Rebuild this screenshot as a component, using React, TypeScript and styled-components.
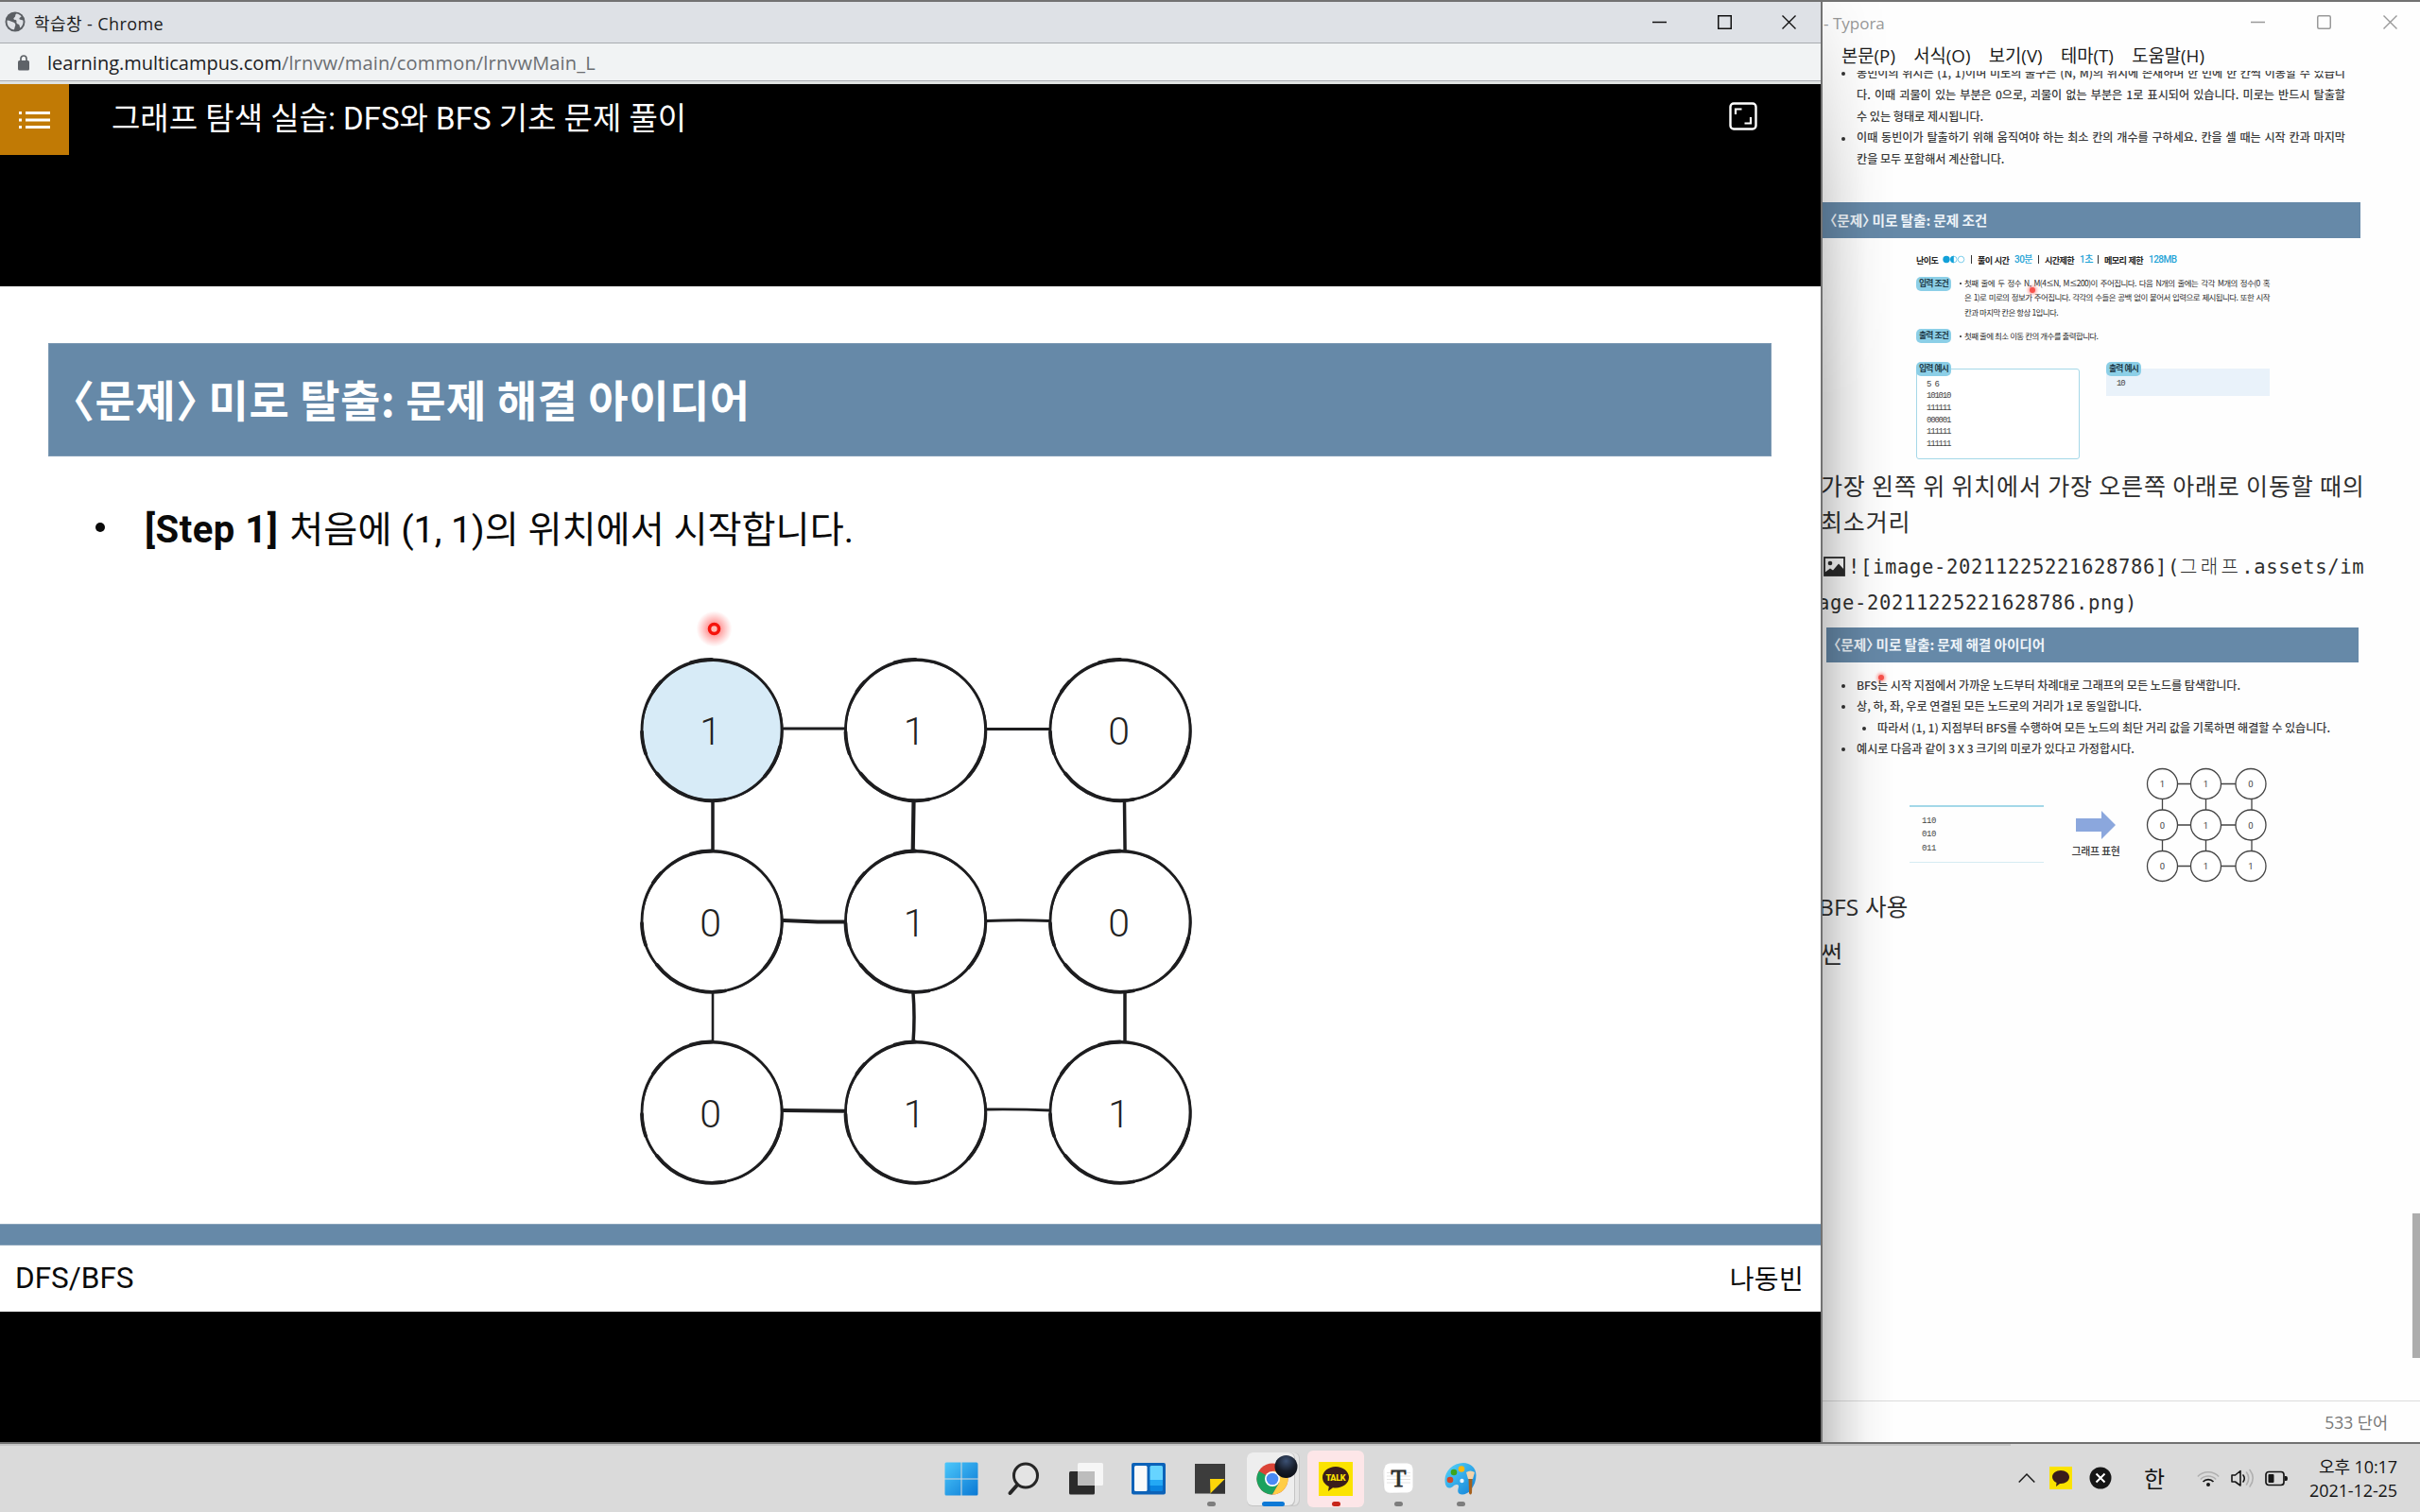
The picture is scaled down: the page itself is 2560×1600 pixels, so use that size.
import React from 'react';
import styled, { createGlobalStyle } from 'styled-components';

const KR = '"Noto Sans CJK KR", sans-serif';
const RKR = 'Roboto, "Noto Sans CJK KR", sans-serif';
const UI = '"Open Sans", "Noto Sans CJK KR", sans-serif';
const MONO = '"DejaVu Sans Mono", "Noto Sans CJK KR", monospace';
const STEEL = '#6689a8';
const BORDER = '#727272';

const Global = createGlobalStyle`
  *, *::before, *::after { box-sizing: border-box; }
  body { margin: 0; background: #d9d9d9; overflow: hidden; }
  svg { display: block; flex: none; overflow: visible; }
`;

const Desktop = styled.div`
  width: 2560px;
  height: 1600px;
  display: flex;
  flex-direction: column;
  overflow: hidden;
  font-family: ${KR};
  white-space: nowrap;
`;

const Windows = styled.div`
  height: 1528px;
  display: flex;
  border-top: 2px solid ${BORDER};
  border-bottom: 2px solid ${BORDER};
`;

/* ---------- Chrome window ---------- */

const ChromeWindow = styled.section`
  width: 1928px;
  flex: none;
  display: flex;
  flex-direction: column;
  border-right: 2px solid ${BORDER};
  background: #000;
`;

const TitleBar = styled.header`
  height: 44px;
  display: flex;
  align-items: center;
  padding: 0 26px 1px 5px;
  background: #dee1e6;
  border-bottom: 1px solid #a9acb0;
`;

const WindowTitle = styled.span`
  margin-left: 9px;
  padding-top: 4px;
  flex: 1;
  font: 400 18px/30px ${UI};
  letter-spacing: 0.4px;
  color: #1c1c1c;
`;

const Controls = styled.div<{ $gap: number; $color: string }>`
  display: flex;
  align-items: center;
  gap: ${(p) => p.$gap}px;
  color: ${(p) => p.$color};
`;

const AddressBar = styled.div`
  height: 43px;
  display: flex;
  align-items: center;
  padding: 1px 0 0 19px;
  background: #f1f3f4;
  border-bottom: 3px solid #dfe2e2;
  box-shadow: inset 0 -1px 0 #a9acb0;
`;

const Url = styled.span`
  margin-left: 19px;
  font: 400 20px/30px ${UI};
  color: #202124;
`;

const UrlPath = styled.span`
  color: #6b6e72;
  letter-spacing: 0.17px;
`;

const PlayerHeader = styled.div`
  height: 214px;
  display: flex;
  align-items: flex-start;
`;

const MenuButton = styled.button`
  width: 73px;
  height: 75px;
  padding: 0;
  border: 0;
  background: #c17a05;
  display: flex;
  align-items: center;
  justify-content: center;
`;

const LectureTitle = styled.h1`
  margin: 0 0 0 45px;
  flex: 1;
  font: 400 33px/74px ${RKR};
  color: #fff;
`;

const ExpandButton = styled.button`
  margin: 19px 67px 0 0;
  padding: 0;
  border: 0;
  background: none;
`;

const Slide = styled.main`
  height: 1085px;
  padding-top: 60px;
  display: flex;
  flex-direction: column;
  background: #fff;
  color: #0a0a0a;
`;

const SlideHeading = styled.h2`
  margin: 0 52px 0 51px;
  height: 120px;
  padding-left: 26px;
  background: ${STEEL};
  box-shadow: inset 0 0 0 1px #7d9ab4;
  font: 700 46px/117px ${KR};
  letter-spacing: 0.5px;
  color: #fff;
`;

const Angle = styled.span`
  font-feature-settings: 'halt';
`;

const StepLine = styled.div`
  height: 150px;
  display: flex;
  align-items: baseline;
  padding-left: 101px;
  font: 400 39.2px/156px ${RKR};
`;

const BigBullet = styled.i`
  width: 10px;
  height: 10px;
  margin: 0 42px 0 0;
  border-radius: 50%;
  background: #0a0a0a;
  transform: translateY(-11px);
`;

const StepLabel = styled.b`
  margin-right: 12px;
  font: 700 40px/156px ${RKR};
  letter-spacing: 0.5px;
`;

const SlideStripe = styled.div`
  height: 23px;
  background: ${STEEL};
  border-top: 1px solid #8aa4bb;
  border-bottom: 1px solid #8aa4bb;
`;

const SlideFooter = styled.footer`
  height: 70px;
  display: flex;
  justify-content: space-between;
  padding: 0 18px 0 16px;
  font: 400 31.5px/70px ${RKR};
`;

const Author = styled.span`
  font: 400 28px/68px ${KR};
  letter-spacing: 0.3px;
`;

/* ---------- Typora window ---------- */

const TyporaWindow = styled.section`
  position: relative;
  flex: 1;
  min-width: 0;
  display: flex;
  flex-direction: column;
  background: #fefefe;
  overflow: hidden;
`;

const WindowShade = styled.div`
  position: absolute;
  inset: 0 auto 0 0;
  width: 76px;
  background: linear-gradient(90deg, rgba(0, 0, 0, 0.22), rgba(0, 0, 0, 0.12) 26%, rgba(0, 0, 0, 0.03) 62%, transparent);
  mask-image: linear-gradient(180deg, rgba(0, 0, 0, 0.1), rgba(0, 0, 0, 0.7) 200px, #000 420px);
  pointer-events: none;
`;

const TyporaTitle = styled.header`
  height: 43px;
  display: flex;
  align-items: center;
  padding: 0 24px 1px 1px;
`;

const TyporaName = styled.span`
  flex: 1;
  padding-top: 3px;
  font: 400 17px/30px ${UI};
  color: #999;
`;

const MenuBar = styled.nav`
  height: 30px;
  display: flex;
  gap: 19.3px;
  padding-left: 20px;
  font: 400 18.8px/29px ${UI};
  color: #1b1b1b;
`;

const Doc = styled.article`
  flex: 1;
  min-height: 0;
  overflow: hidden;
  color: #2e2e2e;
`;

const Figure = styled.section<{ $top: number }>`
  margin-top: ${(p) => p.$top}px;
  color: #3a3a3a;
`;

const BulletLine = styled.div<{ $pitch: number; $indent?: number; $bullet?: boolean; $fill?: boolean }>`
  display: flex;
  height: ${(p) => p.$pitch}px;
  padding-left: ${(p) => 20 + (p.$indent ?? 0)}px;
  font: 500 12.1px/${(p) => p.$pitch}px ${KR};

  &::before {
    content: '';
    flex: none;
    width: 4px;
    height: 4px;
    margin: ${(p) => p.$pitch / 2 - 1}px 12px 0 0;
    border-radius: 50%;
    background: ${(p) => (p.$bullet === false ? 'transparent' : '#333')};
  }
  span {
    width: ${(p) => (p.$fill ? '517px' : 'auto')};
    white-space: ${(p) => (p.$fill ? 'normal' : 'nowrap')};
    text-align: justify;
    text-align-last: ${(p) => (p.$fill ? 'justify' : 'left')};
  }
`;

const FigureHeading = styled.h3<{ $left?: number; $width: number; $h: number; $gap?: number }>`
  margin: 0 0 ${(p) => p.$gap ?? 0}px ${(p) => p.$left ?? 0}px;
  width: ${(p) => p.$width}px;
  height: ${(p) => p.$h}px;
  padding-left: 8px;
  background: ${STEEL};
  font: 700 14.7px/${(p) => p.$h - 1}px ${KR};
  letter-spacing: -0.1px;
  color: #eef4f9;
`;

const MetaRow = styled.div`
  display: grid;
  grid-template-columns: 28px 30px 7px 39px 25px 7px 37px 19px 7px 47px 30px;
  align-items: center;
  height: 14px;
  margin: 15px 0 11px 99px;
  font: 700 9.1px/14px ${KR};
  letter-spacing: -0.65px;
  word-spacing: 1px;
  color: #222;
`;

const MetaValue = styled.span`
  font-family: ${RKR};
  font-weight: 500;
  font-size: 10px;
  line-height: 16px;
  letter-spacing: -0.5px;
  color: #1ea3d6;
`;

const MetaRule = styled.i`
  width: 1px;
  height: 9px;
  background: #333;
`;

const Condition = styled.div<{ $bottom: number }>`
  display: flex;
  margin: 0 0 ${(p) => p.$bottom}px 99px;
`;

const Pill = styled.span<{ $drop?: number }>`
  flex: none;
  width: 37px;
  height: 15px;
  margin-top: ${(p) => p.$drop ?? 0}px;
  border-radius: 5px;
  background: #8ccfe7;
  text-align: center;
  font: 700 8.8px/14px ${KR};
  letter-spacing: -0.85px;
  word-spacing: 1px;
  color: #1f3a48;
`;

const ConditionText = styled.div`
  width: 329px;
  margin-left: 8px;
  padding-left: 6px;
  font: 400 8.5px/15.7px ${KR};
  letter-spacing: -0.6px;
  word-spacing: 0.3px;
  color: #2a2a2a;
`;

const ConditionLine = styled.div<{ $fill?: boolean; $bullet?: boolean }>`
  height: 15.7px;
  white-space: ${(p) => (p.$fill ? 'normal' : 'nowrap')};
  text-align-last: ${(p) => (p.$fill ? 'justify' : 'left')};

  &::before {
    content: ${(p) => (p.$bullet ? "''" : 'none')};
    float: left;
    width: 2px;
    height: 2px;
    margin: 7px 0 0 -5px;
    border-radius: 50%;
    background: #222;
  }
`;

const Examples = styled.div`
  display: flex;
  align-items: flex-start;
  gap: 28px;
  margin: 19px 0 0 99px;
`;

const Example = styled.div<{ $open?: boolean }>`
  width: 173px;
  height: ${(p) => (p.$open ? 103 : 36)}px;
  display: flex;
  flex-direction: column;
  background: linear-gradient(${(p) => (p.$open ? '#fff, #fff' : '#e9f2fa, #e9f2fa')}) no-repeat 0 7px;
`;

const ExampleBody = styled.pre<{ $open?: boolean }>`
  margin: -8px 0 0;
  padding: ${(p) => (p.$open ? '10px 0 0 10px' : '10px 0 0 11px')};
  flex: 1;
  border: ${(p) => (p.$open ? '1.5px solid #a5d8e8' : '0')};
  border-radius: 3px;
  font: 400 9px/12.7px "Liberation Mono", monospace;
  letter-spacing: -1.2px;
  color: #444;
`;

const ExamplePill = styled(Pill)`
  position: relative;
  z-index: 1;
`;

const Paragraph = styled.p<{ $top: number; $left?: number; $ls?: number; $latin?: boolean }>`
  margin: ${(p) => p.$top}px 0 0 ${(p) => p.$left ?? 0}px;
  font: 400 ${(p) => (p.$latin ? 24.5 : 25)}px/38px ${(p) => (p.$latin ? UI : KR)};
  letter-spacing: ${(p) => p.$ls ?? 0}px;
`;

const CodeLine = styled.div<{ $left: number; $top?: number }>`
  display: flex;
  align-items: center;
  gap: 3px;
  height: 38.5px;
  margin: ${(p) => p.$top ?? 0}px 0 0 ${(p) => p.$left}px;
  font: 400 20.5px/38.5px ${MONO};
  letter-spacing: 0.66px;
`;

const CodeHangul = styled.span`
  font: 300 20px/38.5px ${KR};
  letter-spacing: 3.3px;
`;

const Picture = styled.div`
  height: 137px;
  display: flex;
  align-items: flex-start;
`;

const SampleBlock = styled.pre`
  width: 142px;
  height: 61px;
  margin: 48px 0 0 92px;
  padding: 8px 0 0 13px;
  border-top: 2px solid #a3d8e8;
  border-bottom: 1px solid #d6ecf3;
  font: 400 9px/14.8px "Liberation Mono", monospace;
  letter-spacing: -0.4px;
  color: #444;
`;

const ArrowBlock = styled.div`
  width: 64px;
  margin: 54px 21px 0 23px;
  display: flex;
  flex-direction: column;
  align-items: center;
  gap: 3px;
  font: 500 11px/18px ${KR};
  letter-spacing: -0.35px;
`;

const GraphFrame = styled.div`
  padding-top: 8px;
`;

const StatusBar = styled.footer`
  height: 44px;
  flex: none;
  border-top: 1px solid #dcdcdc;
  padding-right: 34px;
  text-align: right;
  font: 400 17.5px/45px ${UI};
  color: #777;
`;

const ScrollThumb = styled.div`
  position: absolute;
  right: 0;
  top: 1282px;
  width: 8px;
  height: 153px;
  background: #adadad;
`;

/* ---------- Taskbar ---------- */

const Taskbar = styled.footer`
  flex: 1;
  display: flex;
  align-items: center;
  padding: 0 24px 0 984px;
  background: linear-gradient(#c6c6c6, #c6c6c6) no-repeat 0 0 / 2127px 2px, #dadada;
`;

const Slot = styled.div`
  position: relative;
  width: 66px;
  height: 72px;
  padding-top: 19px;
  display: flex;
  flex-direction: column;
  align-items: center;

  > svg { position: relative; }
`;

const Tile = styled.div<{ $x: number; $y: number; $w: number; $h: number; $bg: string }>`
  position: absolute;
  left: ${(p) => p.$x}px;
  top: ${(p) => p.$y}px;
  width: ${(p) => p.$w}px;
  height: ${(p) => p.$h}px;
  border-radius: 6px;
  background: ${(p) => p.$bg};
`;

const Indicator = styled.i<{ $w?: number; $color?: string }>`
  position: relative;
  width: ${(p) => p.$w ?? 9}px;
  height: 5px;
  margin-top: 6px;
  border-radius: 2.5px;
  background: ${(p) => p.$color ?? '#7d7d7d'};
`;

const Tray = styled.div`
  margin-left: auto;
  display: flex;
  align-items: center;
  color: #141414;
`;

const TrayItem = styled.span<{ $gap: number }>`
  display: flex;
  margin-right: ${(p) => p.$gap}px;
`;

const Ime = styled.span`
  width: 22px;
  margin-right: 34px;
  font: 400 24px/34px ${KR};
`;

const Clock = styled.div`
  width: 116px;
  padding-top: 1px;
  text-align: right;
  font: 400 18px/25px ${UI};
  letter-spacing: -0.1px;
`;

/* ---------- Drawings ---------- */

const MinimizeIcon = () => (
  <svg width="15" height="15"><path d="M0 7.5H15" stroke="currentColor" strokeWidth="1.5" /></svg>
);
const MaximizeIcon = ({ r = 0 }: { r?: number }) => (
  <svg width="15" height="15"><rect x=".75" y=".75" width="13.5" height="13.5" rx={r} fill="none" stroke="currentColor" strokeWidth="1.5" /></svg>
);
const CloseIcon = () => (
  <svg width="15" height="15"><path d="M.5.5l14 14M14.5.5l-14 14" stroke="currentColor" strokeWidth="1.4" /></svg>
);

const GlobeIcon = () => (
  <svg width="22" height="22" viewBox="0 0 22 22">
    <circle cx="11" cy="11" r="10.500" fill="#5b5f64" />
    <path d="M2.500 9.500c3 .3 5 1.500 6.500 2 1.800.6 2.300 1.500 2.300 3 0 1.200-.8 1.700-.8 3 0 .8-.3 1.500-1 2C5.500 18.500 2.500 15.500 2.500 11zM12.500 2.500c2 .3 3.800 1.300 5 2.800-.3 1.200-1.500 1-2 2-.5 1.200.8 1.700 2 1.700.8 0 1.500.3 2 .8.4 3.500-1 6-3 7.700-.8-.5-.5-2-1.200-3.200-.7-1-2.300-.6-2.800-2-.4-1.300.4-2-.3-2.800-.8-.8-2.200-.2-2.700-1.200-.6-1.300 1-1.800 1.500-2.800.5-1.200 0-2.500 1.500-3z" fill="#dee1e6" />
  </svg>
);

const LockIcon = () => (
  <svg width="12" height="17" viewBox="0 0 12 17">
    <rect y="6" width="12" height="10.500" rx="1.500" fill="#5f6368" />
    <path d="M3 7V4a3 3 0 0 1 6 0v3" fill="none" stroke="#5f6368" strokeWidth="1.700" />
  </svg>
);

const ListIcon = () => (
  <svg width="33" height="20" viewBox="0 0 33 20" fill="#fff">
    <path d="M0 1h3v3H0zM0 8.500h3v3H0zM0 16h3v3H0zM7 1h26v3H7zM7 8.500h26v3H7zM7 16h26v3H7z" />
  </svg>
);

const ExpandIcon = () => (
  <svg width="30" height="30" fill="none" stroke="#fff">
    <rect x="1.500" y="1.500" width="27" height="27" rx="3.500" strokeWidth="2.400" />
    <path d="M7 13V7.500H13.500M23 16V22.500H16.500" strokeWidth="2.200" />
  </svg>
);

const BrokenImageIcon = () => (
  <svg width="23" height="21" viewBox="0 0 23 21">
    <rect x="1" y="1" width="21" height="19" fill="none" stroke="#2b2b2b" strokeWidth="1.800" />
    <circle cx="7" cy="7" r="2.300" fill="#2b2b2b" />
    <path d="M1 20v-3l6-4.500 3 2 6-7 6 6.500v6z" fill="#2b2b2b" />
  </svg>
);

const GRID = [[1, 1, 0], [0, 1, 0], [0, 1, 1]];

function MazeGraph() {
  const xs = [753, 968.5, 1185];
  const ys = [139.5, 342, 544];
  const ink = '#1d1d1f';
  return (
    <svg width="1926" height="662" viewBox="0 0 1926 662">
      <defs>
        <radialGradient id="laser">
          <stop offset="0.3" stopColor="#ff2a2a" stopOpacity=".5" />
          <stop offset="1" stopColor="#ff4a4a" stopOpacity="0" />
        </radialGradient>
      </defs>
      <g stroke={ink} fill="none" strokeLinecap="round">
        <path strokeWidth="3" d="M829 138h65M1044 138.500h67M1044 341.500q34-1.500 67 0M1044 541q34-.5 67 1" />
        <path strokeWidth="4" d="M829 341l36 1.500h29M829 542l65 .8" />
        <path strokeWidth="3.500" d="M754 216v52M1189.500 216l.6 52M966 418q2 25 0 52M1190 418v52" />
        <path strokeWidth="4.200" d="M966.500 216l-.8 52" />
        <path strokeWidth="2.600" d="M754 418v52" />
      </g>
      {GRID.map((row, r) =>
        row.map((v, c) => (
          <g key={`${r}${c}`} transform={`translate(${xs[c]} ${ys[r]})`} fill="none" stroke={ink}>
            <ellipse rx="74" ry="74.500" fill={r + c === 0 ? '#d7ebf7' : '#fff'} strokeWidth="2.800" />
            <ellipse rx="74.300" ry="74" cx=".4" cy=".8" transform="rotate(-8)" strokeWidth="1.800" />
            <path d="M-58 46A74 74.500 0 0 0 14 73.500M-74 2A74 74.500 0 0 0 -70 25M72 18A74 74.500 0 0 1 56 49M-62-41A74 74.500 0 0 1 -54-51M-22-71.500A74 74.500 0 0 1 0-74.600" strokeWidth="3.800" strokeLinecap="round" />
            <text x="-1.500" y="15.500" textAnchor="middle" fontFamily="Roboto, sans-serif" fontSize="41" fontWeight="300" fill="#222" stroke="none">{v}</text>
          </g>
        )),
      )}
      <circle cx="755.500" cy="32.500" r="19" fill="url(#laser)" />
      <circle cx="755.500" cy="32.500" r="5" fill="#ffb9b3" stroke="#f5130b" strokeWidth="3.600" />
    </svg>
  );
}

function SmallGraph() {
  const xs = [17.5, 63.5, 111];
  const ys = [17.5, 61, 104.5];
  return (
    <svg width="130" height="124" viewBox="0 0 130 124">
      <path d="M17.500 17.500H111M17.500 61H111M17.500 104.500H111M17.500 17.500V104.500M63.500 17.500V104.500M112 17.500V104.500" stroke="#444" strokeWidth="1.300" />
      {GRID.map((row, r) =>
        row.map((v, c) => (
          <g key={`${r}${c}`} transform={`translate(${xs[c]} ${ys[r]})`}>
            <circle r="16" fill="#fff" stroke="#444" strokeWidth="1.300" />
            <text y="3.500" textAnchor="middle" fontFamily="Roboto, sans-serif" fontSize="9.500" fill="#444">{v}</text>
          </g>
        )),
      )}
    </svg>
  );
}

const LaserDot = styled.i<{ $x: number; $y: number }>`
  position: absolute;
  left: ${(p) => p.$x}px;
  top: ${(p) => p.$y}px;
  width: 6px;
  height: 6px;
  border-radius: 50%;
  background: #f8524c;
  box-shadow: 0 0 3px 2px rgba(255, 90, 84, 0.45);
`;

const StartIcon = () => (
  <svg width="36" height="36" viewBox="0 0 36 36">
    <defs><linearGradient id="win" x1="0" y1="0" x2="1" y2="1" gradientUnits="objectBoundingBox"><stop stopColor="#4cc8fb" /><stop offset="1" stopColor="#0a78d4" /></linearGradient></defs>
    <path d="M2 .5h15.500V17.500H.5V2Q.5.5 2 .5zM18.500.5H34Q35.500.5 35.500 2V17.500H18.500zM.5 18.500H17.500V35.500H2Q.5 35.500.5 34zM18.500 18.500H35.500V34q0 1.500-1.500 1.500H18.500z" fill="url(#win)" />
  </svg>
);

const SearchIcon = () => (
  <svg width="36" height="36" viewBox="0 0 36 36" fill="none" stroke="#262626">
    <circle cx="20" cy="14.500" r="12.500" strokeWidth="3" fill="#e4e4e4" />
    <path d="M11 24.500L3.500 33" strokeWidth="4" strokeLinecap="round" />
  </svg>
);

const TaskViewIcon = () => (
  <svg width="36" height="36" viewBox="0 0 36 36">
    <rect y="10" width="27" height="24.500" rx="1.500" fill="#2b2b2b" />
    <rect x="9" y="1" width="27" height="24" rx="1.500" fill="#f6f6f6" />
    <path d="M9 10H27V25H10.500Q9 25 9 23.500z" fill="#bdbdbd" />
  </svg>
);

const WidgetsIcon = () => (
  <svg width="36" height="36" viewBox="0 0 36 36">
    <rect y="1" width="36" height="33.500" rx="2" fill="#0c62b8" />
    <rect x="3" y="4" width="13.500" height="27" rx="1.500" fill="#fafafa" />
    <rect x="19.500" y="4" width="13.500" height="27" rx="1.500" fill="#0a84e0" />
    <path d="M21 4h10.500Q33 4 33 5.500V19H19.500V5.500Q19.500 4 21 4z" fill="#66d4ff" />
    <path d="M19.500 19H33v6H19.500z" fill="#23a8f5" />
  </svg>
);

const StickyIcon = () => (
  <svg width="36" height="36" viewBox="0 0 36 36">
    <path d="M1 2H33V33.500H1z" fill="#3c3c3c" />
    <path d="M17 18H33L17.500 33.500z" fill="#fdd509" />
    <path d="M33 18V33.500H17.500z" fill="#333" />
  </svg>
);

const ChromeIcon = () => (
  <svg width="36" height="36" viewBox="0 0 36 36">
    <circle cx="17" cy="18" r="16.500" fill="#db4437" />
    <path d="M17 18L2.700 9.750A16.500 16.500 0 0 0 17 34.500L24.200 22z" fill="#1ba25f" />
    <path d="M17 34.500A16.500 16.500 0 0 0 31.300 9.750H17L24.200 22z" fill="#ffcd46" />
    <circle cx="17" cy="18" r="8" fill="#fff" />
    <circle cx="17" cy="18" r="6.300" fill="#4a8af4" />
    <defs><radialGradient id="avatar" cx=".5" cy=".25" r=".75"><stop stopColor="#3c5174" /><stop offset=".6" stopColor="#161c28" /><stop offset="1" stopColor="#0b0e15" /></radialGradient></defs>
    <circle cx="31.500" cy="5" r="12" fill="url(#avatar)" />
  </svg>
);

const TalkIcon = () => (
  <svg width="36" height="36" viewBox="0 0 36 36">
    <rect width="36" height="36" fill="#fbe300" />
    <path d="M18 5c7.700 0 14 5 14 11.300S25.700 27.500 18 27.500q-1.500 0-3-.2L10 31l.8-5C6.500 24 4 20.500 4 16.300 4 10 10.300 5 18 5z" fill="#3a1d1b" />
    <text x="18" y="20" textAnchor="middle" fontFamily="Roboto, sans-serif" fontWeight="900" fontSize="9" fill="#fbe300" textLength="21">TALK</text>
  </svg>
);

const TyporaIcon = () => (
  <svg width="36" height="36" viewBox="0 0 36 36">
    <rect x="2" y="4" width="28" height="29" rx="6" fill="#e9e9e9" stroke="#cfcfcf" strokeWidth=".6" transform="rotate(-5 16 18)" />
    <rect x="3.500" y="1.500" width="30" height="31" rx="6" fill="#fff" />
    <path d="M6 11.500h25M6 15h25M6 18.500h25M6 22h25" stroke="#e3e3e3" />
    <text x="18.500" y="25.500" textAnchor="middle" fontFamily="'Liberation Serif', serif" fontSize="26" fill="#2d2d2d" stroke="#2d2d2d" strokeWidth=".9">T</text>
  </svg>
);

const PaintIcon = () => (
  <svg width="36" height="36" viewBox="0 0 36 36">
    <defs><linearGradient id="paint" x1="0" y1="0" x2="1" y2="1"><stop stopColor="#56d5fa" /><stop offset="1" stopColor="#1180d8" /></linearGradient></defs>
    <path d="M21 1C10 1 1.500 9.500 1.500 19c0 4 1 8.500 4.500 8.500 4 0 5-4 8.500-3.500 4 1-1.500 6 2 9.500 3 2.500 9 .5 12-3.500 4-5 6-10 6-16C34.500 6 28 1 21 1z" fill="url(#paint)" />
    <circle cx="7" cy="19" r="3.300" fill="#d1482a" />
    <circle cx="11" cy="11" r="3.300" fill="#3ca51c" />
    <circle cx="19" cy="7.500" r="3.300" fill="#fbb80f" />
    <circle cx="19.500" cy="20" r="2.200" fill="#e6f3fb" />
    <path d="M26.500 17h4l-.5 16q-1.500 3-3 0z" fill="#a5601c" />
    <path d="M24 11q4.500-3 9 0l-2 7h-5z" fill="#f2d3ab" />
  </svg>
);

const ChevronUpIcon = () => (
  <svg width="18" height="10"><path d="M.7 9.500L9 1l8.300 8.500" fill="none" stroke="#1a1a1a" strokeWidth="1.500" /></svg>
);
const KakaoTrayIcon = () => (
  <svg width="24" height="24" viewBox="0 0 24 24">
    <rect width="24" height="24" fill="#fbe300" />
    <path d="M12 4c5 0 9 3 9 7s-4 7-9 7h-1l-4 3 .5-4C5 16 3 13.500 3 11c0-4 4-7 9-7z" fill="#3a1d1b" />
  </svg>
);
const BlockedIcon = () => (
  <svg width="24" height="24" viewBox="0 0 24 24">
    <circle cx="12" cy="12" r="11.500" fill="#161616" />
    <path d="M7.500 7.500l9 9M16.500 7.500l-9 9" stroke="#fff" strokeWidth="2" />
  </svg>
);
const WifiIcon = () => (
  <svg width="24" height="24" viewBox="0 0 24 24" fill="none" strokeWidth="1.500">
    <path d="M.8 10.500a15.500 15.500 0 0 1 22.400 0M3.800 13.500a11.500 11.500 0 0 1 16.400 0" stroke="#b0b0b0" />
    <path d="M6.500 16a7.500 7.500 0 0 1 11 0" stroke="#161616" strokeWidth="1.700" />
    <circle cx="12" cy="19" r="2" fill="#161616" />
  </svg>
);
const SpeakerIcon = () => (
  <svg width="24" height="24" viewBox="0 0 24 24" fill="none" strokeWidth="1.600" strokeLinecap="round">
    <path d="M1 9h3.500L10 4.500v15.500L4.500 16H1z" stroke="#161616" strokeLinejoin="round" />
    <path d="M13 9q2.500 3.500 0 7" stroke="#161616" />
    <path d="M16.500 6q4.500 6 0 13M20 3.500q6.500 8.500 0 17.500" stroke="#b0b0b0" />
  </svg>
);
const BatteryIcon = () => (
  <svg width="24" height="24" viewBox="0 0 24 24">
    <rect x="1" y="5.500" width="19" height="14" rx="3" fill="none" stroke="#161616" strokeWidth="1.700" />
    <rect x="3.500" y="8" width="6" height="9" rx="1" fill="#161616" />
    <path d="M21 10h1.500q1.500 0 1.500 2.500T22.500 15H21z" fill="#161616" />
  </svg>
);

/* ---------- Page ---------- */

const SAMPLE_INPUT = '5 6\n101010\n111111\n000001\n111111\n111111';

function LectureWindow() {
  return (
    <ChromeWindow>
      <TitleBar>
        <GlobeIcon />
        <WindowTitle>학습창 - Chrome</WindowTitle>
        <Controls $gap={53.5} $color="#111"><MinimizeIcon /><MaximizeIcon /><CloseIcon /></Controls>
      </TitleBar>
      <AddressBar>
        <LockIcon />
        <Url>learning.multicampus.com<UrlPath>/lrnvw/main/common/lrnvwMain_L</UrlPath></Url>
      </AddressBar>
      <PlayerHeader>
        <MenuButton><ListIcon /></MenuButton>
        <LectureTitle>그래프 탐색 실습: DFS와 BFS 기초 문제 풀이</LectureTitle>
        <ExpandButton><ExpandIcon /></ExpandButton>
      </PlayerHeader>
      <Slide>
        <SlideHeading><Angle>〈</Angle>문제<Angle>〉</Angle> 미로 탈출: 문제 해결 아이디어</SlideHeading>
        <StepLine>
          <BigBullet />
          <StepLabel>[Step 1]</StepLabel>
          <span>처음에 (1, 1)의 위치에서 시작합니다.</span>
        </StepLine>
        <MazeGraph />
        <SlideStripe />
        <SlideFooter><span>DFS/BFS</span><Author>나동빈</Author></SlideFooter>
      </Slide>
    </ChromeWindow>
  );
}

function NotesWindow() {
  return (
    <TyporaWindow>
      <TyporaTitle>
        <TyporaName>- Typora</TyporaName>
        <Controls $gap={55} $color="#999"><MinimizeIcon /><MaximizeIcon r={1.5} /><CloseIcon /></Controls>
      </TyporaTitle>
      <MenuBar>
        {['본문(P)', '서식(O)', '보기(V)', '테마(T)', '도움말(H)'].map((m) => <span key={m}>{m}</span>)}
      </MenuBar>
      <Doc>
        <Figure $top={-9}>
          <BulletLine $pitch={22.75} $fill><span>동빈이의 위치는 (1, 1)이며 미로의 출구는 (N, M)의 위치에 존재하며 한 번에 한 칸씩 이동할 수 있습니</span></BulletLine>
          <BulletLine $pitch={22.75} $fill $bullet={false}><span>다. 이때 괴물이 있는 부분은 0으로, 괴물이 없는 부분은 1로 표시되어 있습니다. 미로는 반드시 탈출할</span></BulletLine>
          <BulletLine $pitch={22.75} $bullet={false}><span>수 있는 형태로 제시됩니다.</span></BulletLine>
          <BulletLine $pitch={22.75} $fill><span>이때 동빈이가 탈출하기 위해 움직여야 하는 최소 칸의 개수를 구하세요. 칸을 셀 때는 시작 칸과 마지막</span></BulletLine>
          <BulletLine $pitch={22.75} $bullet={false}><span>칸을 모두 포함해서 계산합니다.</span></BulletLine>
        </Figure>
        <Figure $top={34}>
          <FigureHeading $width={569} $h={38}><Angle>〈</Angle>문제<Angle>〉</Angle> 미로 탈출: 문제 조건</FigureHeading>
          <MetaRow>
            <span>난이도</span>
            <svg width="24" height="9" viewBox="0 0 24 9">
              <circle cx="4" cy="4.500" r="3.700" fill="#12a0d8" />
              <circle cx="11.800" cy="4.500" r="3.300" fill="#fff" stroke="#5cc0e6" strokeWidth=".8" />
              <path d="M11.800.8a3.700 3.700 0 0 0 0 7.400z" fill="#12a0d8" />
              <circle cx="19.500" cy="4.500" r="3.300" fill="#fff" stroke="#5cc0e6" strokeWidth=".8" />
            </svg>
            <MetaRule />
            <span>풀이 시간</span><MetaValue>30분</MetaValue><MetaRule />
            <span>시간제한</span><MetaValue>1초</MetaValue><MetaRule />
            <span>메모리 제한</span><MetaValue>128MB</MetaValue>
          </MetaRow>
          <Condition $bottom={9}>
            <Pill $drop={1}>입력 조건</Pill>
            <ConditionText>
              <ConditionLine $fill $bullet>첫째 줄에 두 정수 N, M(4≤N, M≤200)이 주어집니다. 다음 N개의 줄에는 각각 M개의 정수(0 혹</ConditionLine>
              <ConditionLine $fill>은 1)로 미로의 정보가 주어집니다. 각각의 수들은 공백 없이 붙어서 입력으로 제시됩니다. 또한 시작</ConditionLine>
              <ConditionLine>칸과 마지막 칸은 항상 1입니다.</ConditionLine>
            </ConditionText>
          </Condition>
          <Condition $bottom={0}>
            <Pill>출력 조건</Pill>
            <ConditionText>
              <ConditionLine $bullet>첫째 줄에 최소 이동 칸의 개수를 출력합니다.</ConditionLine>
            </ConditionText>
          </Condition>
          <Examples>
            <Example $open><ExamplePill>입력 예시</ExamplePill><ExampleBody $open>{SAMPLE_INPUT}</ExampleBody></Example>
            <Example><ExamplePill>출력 예시</ExamplePill><ExampleBody>10</ExampleBody></Example>
          </Examples>
        </Figure>
        <Paragraph $top={8} $left={-2} $ls={0.83}>가장 왼쪽 위 위치에서 가장 오른쪽 아래로 이동할 때의<br />최소거리</Paragraph>
        <CodeLine $left={1} $top={11}>
          <BrokenImageIcon />
          <span>![image-20211225221628786](<CodeHangul>그래프</CodeHangul>.assets/im</span>
        </CodeLine>
        <CodeLine $left={-5}>age-20211225221628786.png)</CodeLine>
        <Figure $top={6}>
          <FigureHeading $left={4} $width={563} $h={37} $gap={13}><Angle>〈</Angle>문제<Angle>〉</Angle> 미로 탈출: 문제 해결 아이디어</FigureHeading>
          <BulletLine $pitch={22.5}><span>BFS는 시작 지점에서 가까운 노드부터 차례대로 그래프의 모든 노드를 탐색합니다.</span></BulletLine>
          <BulletLine $pitch={22.5}><span>상, 하, 좌, 우로 연결된 모든 노드로의 거리가 1로 동일합니다.</span></BulletLine>
          <BulletLine $pitch={22.5} $indent={22}><span>따라서 (1, 1) 지점부터 BFS를 수행하여 모든 노드의 최단 거리 값을 기록하면 해결할 수 있습니다.</span></BulletLine>
          <BulletLine $pitch={22.5}><span>예시로 다음과 같이 3 X 3 크기의 미로가 있다고 가정합시다.</span></BulletLine>
          <Picture>
            <SampleBlock>{'110\n010\n011'}</SampleBlock>
            <ArrowBlock>
              <svg width="42" height="30" viewBox="0 0 42 30"><path d="M0 8H27V0L42 15 27 30V22H0z" fill="#8ba7dd" /></svg>
              <span>그래프 표현</span>
            </ArrowBlock>
            <GraphFrame><SmallGraph /></GraphFrame>
          </Picture>
        </Figure>
        <Paragraph $top={0} $left={-4} $ls={0.2} $latin>BFS 사용</Paragraph>
        <Paragraph $top={10} $left={-2}>썬</Paragraph>
      </Doc>
      <StatusBar>533 단어</StatusBar>
      <LaserDot $x={219} $y={302} />
      <LaserDot $x={59} $y={712} />
      <ScrollThumb />
      <WindowShade />
    </TyporaWindow>
  );
}

function TaskbarPanel() {
  return (
    <Taskbar>
      <Slot><StartIcon /></Slot>
      <Slot><SearchIcon /></Slot>
      <Slot><TaskViewIcon /></Slot>
      <Slot><WidgetsIcon /></Slot>
      <Slot><StickyIcon /><Indicator /></Slot>
      <Slot>
        <Tile $x={15} $y={9} $w={46} $h={57} $bg="#c9c9c9" />
        <Tile $x={15} $y={9} $w={45} $h={56} $bg="#e4e4e4" />
        <Tile $x={5} $y={9} $w={51} $h={57} $bg="#c4c4c4" />
        <Tile $x={5} $y={9} $w={50} $h={56} $bg="#eeeeee" />
        <ChromeIcon /><Indicator $w={24} $color="#0d79d6" />
      </Slot>
      <Slot><Tile $x={3} $y={7} $w={60} $h={60} $bg="#fde6e8" /><TalkIcon /><Indicator $color="#c7261b" /></Slot>
      <Slot><TyporaIcon /><Indicator /></Slot>
      <Slot><PaintIcon /><Indicator /></Slot>
      <Tray>
        <TrayItem $gap={15}><ChevronUpIcon /></TrayItem>
        <TrayItem $gap={18}><KakaoTrayIcon /></TrayItem>
        <TrayItem $gap={34}><BlockedIcon /></TrayItem>
        <Ime>한</Ime>
        <TrayItem $gap={12}><WifiIcon /></TrayItem>
        <TrayItem $gap={12}><SpeakerIcon /></TrayItem>
        <TrayItem $gap={0}><BatteryIcon /></TrayItem>
        <Clock>오후 10:17<br />2021-12-25</Clock>
      </Tray>
    </Taskbar>
  );
}

export default function App() {
  return (
    <Desktop>
      <Global />
      <Windows>
        <LectureWindow />
        <NotesWindow />
      </Windows>
      <TaskbarPanel />
    </Desktop>
  );
}
